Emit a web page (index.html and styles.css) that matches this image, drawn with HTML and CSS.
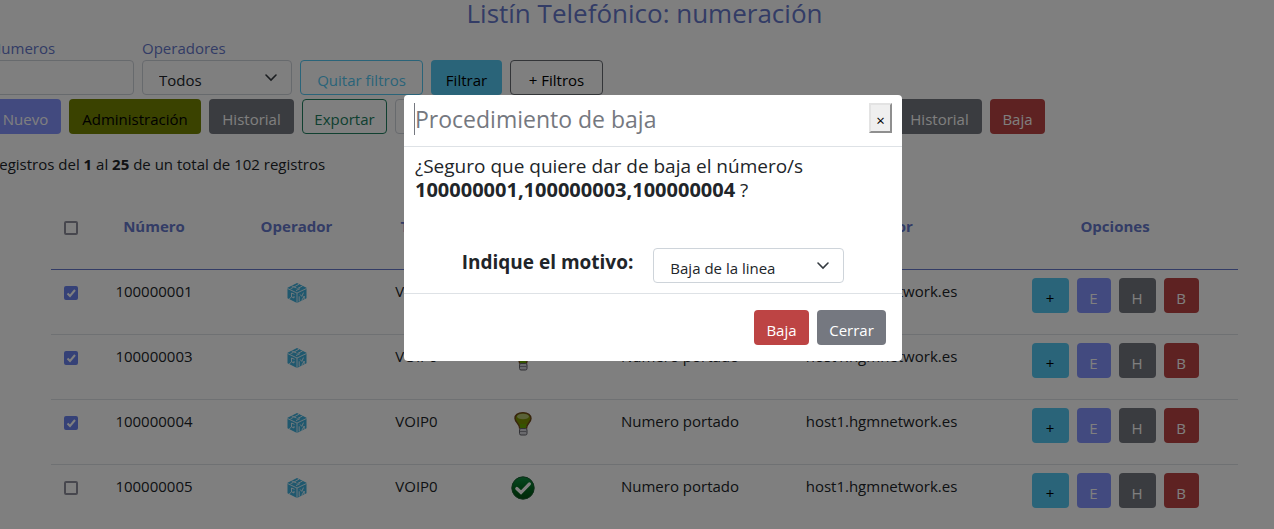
FILE: index.html
```html
<!DOCTYPE html>
<html lang="es">
<head>
<meta charset="utf-8">
<title>Listín Telefónico</title>
<link rel="stylesheet" href="styles.css">
</head>
<body>
<svg class="defs" aria-hidden="true">
  <symbol id="cube" viewBox="0 0 20 20">
    <path class="cube-face" d="M10 0 19.500 4.800V15.200L10 20 .5 15.200V4.800Z"/>
    <path class="cube-line" d="M.5 5.500 10 10 19.500 5.500M10 10V20"/>
    <path class="cube-line" d="M4.500 2.800 9.500 5M12 1.200 7.200 3.900M15.500 3 10.500 5.500M9 7.600 13 5.600M3.500 5.800 6.500 4.300"/>
    <path class="cube-line" d="M7.500 11.300 4.500 10V13.800L7 15V13M2 16.200 4.500 13.800"/>
    <path class="cube-line" d="M12.200 18.500V13.300M13 11.400 14.800 13.400 16.500 9.600M14.700 17.500 17.200 13V16.500"/>
  </symbol>
  <symbol id="bulb" viewBox="0 0 18 24">
    <path d="M9 .8C4 .8 1 3 1 6.600c0 3.400 4.600 5.200 4.600 9.400h7C12.600 11.800 17 10 17 6.600 17 3 14 .8 9 .8Z" fill="#7c9400" stroke="#704818" stroke-width="1.400"/>
    <ellipse cx="9" cy="4.500" rx="6" ry="2.800" fill="#b4c470"/>
    <path d="M6 12h6v4H6z" fill="#6aa800"/>
    <rect x="5.500" y="16.500" width="7.500" height="6.500" rx="1.500" fill="#d4d4da" stroke="#65656c"/>
    <path d="M6 19.500h6.500" stroke="#8a8a92"/>
  </symbol>
  <symbol id="ok" viewBox="0 0 24 24">
    <linearGradient id="green" x2="0" y2="1"><stop offset="0" stop-color="#109044"/><stop offset=".5" stop-color="#006c20"/><stop offset="1" stop-color="#005010"/></linearGradient>
    <circle cx="12" cy="12" r="11.200" fill="url(#green)" stroke="#205c34"/>
    <path d="m5.800 12.500 4.200 4 8.400-8.600" fill="none" stroke="#fff" stroke-width="3.200" stroke-linecap="round"/>
  </symbol>
  <symbol id="chevron" viewBox="0 0 16 16"><path d="m3 6 5 5 5-5" fill="none" stroke="#343a40" stroke-width="1.600" stroke-linecap="round"/></symbol>
  <symbol id="tick" viewBox="0 0 14 14"><path d="m3.500 7.500 2.500 2.500 5-6" fill="none" stroke="#fff" stroke-width="2"/></symbol>
</svg>

<main class="page">
  <h1 class="title">Listín Telefónico: numeración</h1>
  <form class="row filters">
    <div class="field numbers"><label for="num">Numeros</label><input id="num" class="control" type="text"></div>
    <div class="field operators"><label for="op">Operadores</label>
      <div class="select"><select id="op" class="control"><option>Todos</option></select><svg class="chevron"><use href="#chevron"/></svg></div></div>
    <button type="button" class="btn outline-info w-clear">Quitar filtros</button>
    <button type="button" class="btn info w-filter">Filtrar</button>
    <button type="button" class="btn outline-dark w-more">+ Filtros</button>
  </form>
  <div class="row actions">
    <button type="button" class="btn primary w-filter">Nuevo</button>
    <button type="button" class="btn olive w-admin">Administración</button>
    <button type="button" class="btn secondary w-medium">Historial</button>
    <button type="button" class="btn outline-success w-medium">Exportar</button>
    <input class="control bulk" type="text" aria-label="Selección">
    <button type="button" class="btn secondary w-medium">Historial</button>
    <button type="button" class="btn danger w-small">Baja</button>
  </div>
  <p class="summary">Registros del <b>1</b> al <b>25</b> de un total de 102 registros</p>

  <div class="table-wrap">
    <table class="table">
      <colgroup><col class="c-check"><col class="c-number"><col class="c-operator"><col class="c-type"><col class="c-state"><col class="c-notes"><col class="c-server"><col class="c-options"></colgroup>
      <thead><tr><th><span class="check"><input type="checkbox" aria-label="Todos"><svg><use href="#tick"/></svg></span></th><th>Número</th><th>Operador</th><th>Tipo</th><th>Estado</th><th>Notas</th><th>Servidor</th><th>Opciones</th></tr></thead>
      <tbody>
        <tr><td><span class="check"><input type="checkbox" checked aria-label="100000001"><svg><use href="#tick"/></svg></span></td><td>100000001</td><td><svg class="cube"><use href="#cube"/></svg></td><td>VOIP0</td><td><svg class="bulb"><use href="#bulb"/></svg></td><td>Numero portado</td><td>host1.hgmnetwork.es</td><td><div class="options"><button class="btn info w-h">+</button><button class="btn primary w-e">E</button><button class="btn secondary w-h">H</button><button class="btn danger w-b">B</button></div></td></tr>
        <tr><td><span class="check"><input type="checkbox" checked aria-label="100000003"><svg><use href="#tick"/></svg></span></td><td>100000003</td><td><svg class="cube"><use href="#cube"/></svg></td><td>VOIP0</td><td><svg class="bulb"><use href="#bulb"/></svg></td><td>Numero portado</td><td>host1.hgmnetwork.es</td><td><div class="options"><button class="btn info w-h">+</button><button class="btn primary w-e">E</button><button class="btn secondary w-h">H</button><button class="btn danger w-b">B</button></div></td></tr>
        <tr><td><span class="check"><input type="checkbox" checked aria-label="100000004"><svg><use href="#tick"/></svg></span></td><td>100000004</td><td><svg class="cube"><use href="#cube"/></svg></td><td>VOIP0</td><td><svg class="bulb"><use href="#bulb"/></svg></td><td>Numero portado</td><td>host1.hgmnetwork.es</td><td><div class="options"><button class="btn info w-h">+</button><button class="btn primary w-e">E</button><button class="btn secondary w-h">H</button><button class="btn danger w-b">B</button></div></td></tr>
        <tr><td><span class="check"><input type="checkbox" aria-label="100000005"><svg><use href="#tick"/></svg></span></td><td>100000005</td><td><svg class="cube"><use href="#cube"/></svg></td><td>VOIP0</td><td><svg class="ok"><use href="#ok"/></svg></td><td>Numero portado</td><td>host1.hgmnetwork.es</td><td><div class="options"><button class="btn info w-h">+</button><button class="btn primary w-e">E</button><button class="btn secondary w-h">H</button><button class="btn danger w-b">B</button></div></td></tr>
      </tbody>
    </table>
  </div>
</main>

<div class="backdrop">
  <section class="modal" role="dialog" aria-modal="true" aria-labelledby="dlg">
    <header class="modal-head"><h2 id="dlg" class="modal-title">Procedimiento de baja</h2><button type="button" class="close" aria-label="Cerrar ventana">×</button></header>
    <div class="modal-body">
      <p class="question">¿Seguro que quiere dar de baja el número/s<br><b>100000001,100000003,100000004</b> ?</p>
      <div class="reason"><label for="reason">Indique el motivo:</label>
        <div class="select reason-select"><select id="reason" class="control"><option>Baja de la linea</option></select><svg class="chevron"><use href="#chevron"/></svg></div></div>
    </div>
    <footer class="modal-foot"><button type="button" class="btn danger w-small">Baja</button><button type="button" class="btn secondary w-close">Cerrar</button></footer>
  </section>
</div>
</body>
</html>
```

FILE: styles.css
```css
* { box-sizing: border-box; }
body { margin: 0; height: 100vh; overflow: hidden; background: #fff; color: #212529; font: 15px/26px "Open Sans", "Noto Sans", sans-serif; }
button, input, select { font: inherit; color: inherit; }
.defs { position: absolute; width: 0; height: 0; }
.cube-face { fill: #40b0dc; }
.cube-line { fill: none; stroke: #fff; stroke-width: .8; }

/* The list is wider than the window and runs past both sides */
.page { margin: 0 -30px 0 -15px; }
.title { margin: 0; padding-bottom: 10px; text-align: center; font-size: 26px; font-weight: 400; line-height: 26px; color: #6678cc; }
.row { display: flex; align-items: flex-end; gap: 8px; padding-left: 5px; margin-bottom: 4px; }
.field label { display: block; line-height: 24px; color: #6678cc; }
.numbers { width: 144px; }
.operators { width: 150px; }
.control { display: block; width: 100%; height: 35px; padding: 4px 16px 0; border: 1px solid #ced4da; border-radius: 4px; background: #fff; appearance: none; }
.bulk { width: 494px; }
.select { position: relative; }
.chevron { position: absolute; right: 13px; top: 9px; width: 16px; height: 16px; pointer-events: none; }

.btn { height: 35px; padding: 4px 0 0; border: 1px solid transparent; border-radius: 4px; text-align: center; line-height: 28px; background: #fff; white-space: nowrap; }
.primary { background: #8594ff; color: #fff; }
.olive { background: #748500; color: #000; }
.secondary { background: #757880; color: #fff; }
.danger { background: #bd4444; color: #fff; }
.info { background: #54c8f2; color: #000; }
.outline-info { border-color: #54c8f2; color: #54c8f2; }
.outline-dark { border-color: #666a70; color: #000; }
.outline-success { border-color: #208060; color: #208060; }
.w-clear { width: 123px; }
.w-filter { width: 71px; }
.w-more { width: 93px; }
.w-admin { width: 132px; }
.w-medium { width: 85px; }
.w-small { width: 55px; }
.w-close { width: 69px; }
.w-h { width: 37px; }
.w-e { width: 34px; }
.w-b { width: 35px; }

.summary { margin: 17px 0 28px; padding-left: 5px; }
.table-wrap { padding: 0 66px; }
.table { width: 100%; table-layout: fixed; border-collapse: separate; border-spacing: 0; }
.c-check { width: 40px; }
.c-number { width: 126px; }
.c-operator { width: 159px; }
.c-type { width: 81px; }
.c-state { width: 132px; }
.c-notes { width: 182px; }
.c-server { width: 221px; }
.c-options { width: 246px; }
.table th, .table td { height: 65px; padding: 8px 0 0; text-align: center; vertical-align: top; border-bottom: 1px solid #dee2e6; }
.table th { color: #6678cc; border-color: #6678cc; }
.table svg { display: block; margin: 5px auto 0; }
.cube { width: 20px; height: 20px; }
.table .bulb { width: 18px; height: 24px; margin-top: 4px; }
.table .ok { width: 24px; height: 24px; margin-top: 3px; }
.options { display: flex; justify-content: center; gap: 8px; }

.check { display: grid; width: 14px; height: 14px; margin: 8px auto 0; }
.check input { grid-area: 1 / 1; appearance: none; width: 14px; height: 14px; margin: 0; border: 2px solid #8f8f9d; border-radius: 2px; background: #fff; }
.check input:checked { border-color: #6b83ee; background: #6b83ee; }
.check svg { grid-area: 1 / 1; width: 14px; height: 14px; margin: 0; visibility: hidden; pointer-events: none; }
.check input:checked + svg { visibility: visible; }

.backdrop { position: fixed; inset: 0; display: flex; justify-content: center; align-items: flex-start; padding: 95px 0 0 32px; background: rgba(0, 0, 0, .5); }
.modal { width: 498px; border-radius: 4px; background: #fff; }
.modal-head { display: flex; justify-content: space-between; align-items: flex-start; padding: 8px 10px 11px; border-bottom: 1px solid #dee2e6; }
.modal-title { margin: 0; border-left: 1px solid #757880; font-size: 23px; font-weight: 400; line-height: 32px; color: #757880; }
.close { width: 23px; height: 30px; padding: 4px 0 0; border: 2px outset #e3e3e3; background: #efefef; color: #000; line-height: 20px; }
.modal-body { padding: 7px 11px 10px; border-bottom: 1px solid #dee2e6; font-size: 19px; line-height: 24px; }
.question { margin: 0 0 46px; }
.question b { font-size: 20px; }
.reason { display: flex; justify-content: center; gap: 20px; font-weight: 700; }
.reason label { padding-top: 2px; }
.reason-select { width: 191px; font-size: 15px; font-weight: 400; }
.modal-foot { display: flex; justify-content: flex-end; gap: 8px; padding: 16px; }
```
